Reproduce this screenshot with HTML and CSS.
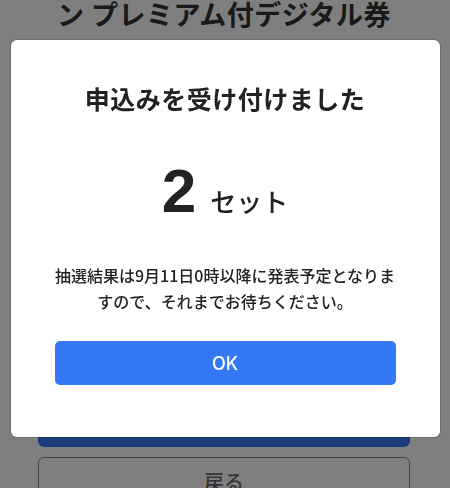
FILE: index.html
```html
<!DOCTYPE html>
<html lang="ja">
<head>
<meta charset="utf-8">
<title>申込み完了</title>
<link rel="stylesheet" href="styles.css">
</head>
<body>
<main class="page">
  <h1 class="page-title">ン プレミアム付デジタル券</h1>
  <div class="actions">
    <button class="btn btn-primary" type="button">申し込む</button>
    <button class="btn btn-back" type="button">戻る</button>
  </div>
</main>
<div class="overlay">
  <div class="modal" role="dialog">
    <h2 class="modal-title">申込みを受け付けました</h2>
    <div class="count">
      <span class="count-num">2</span>
      <span class="count-unit">セット</span>
    </div>
    <p class="modal-text">抽選結果は9月11日0時以降に発表予定となりますので、それまでお待ちください。</p>
    <button class="btn btn-ok" type="button">OK</button>
  </div>
</div>
</body>
</html>
```

FILE: styles.css
```css
* {
  box-sizing: border-box;
}

html, body {
  margin: 0;
  height: 100%;
}

body {
  font-family: "Noto Sans CJK JP", "Noto Sans", sans-serif;
  background: #ffffff;
  color: #333333;
  overflow: hidden;
}

.page {
  padding: 0 40px 0 38px;
}

.page-title {
  margin: 0;
  font-size: 27px;
  line-height: 28px;
  font-weight: 700;
  letter-spacing: 0.5px;
  color: #333333;
  text-align: center;
  white-space: nowrap;
}

.actions {
  margin-top: 371px;
  display: flex;
  flex-direction: column;
  gap: 10px;
}

.btn {
  display: block;
  width: 100%;
  border: 0;
  font-family: inherit;
  padding: 0;
  cursor: pointer;
}

.btn-primary {
  height: 48px;
  border-radius: 6px;
  background: #3478f6;
  color: #ffffff;
  font-size: 20px;
  font-weight: 700;
}

.btn-back {
  height: 48px;
  border-radius: 6px;
  border: 1px solid #888888;
  background: #ffffff;
  color: #666666;
  font-size: 20px;
  font-weight: 500;
}

.overlay {
  position: fixed;
  inset: 0;
  background: rgba(0, 0, 0, 0.5);
  display: flex;
  justify-content: center;
  align-items: flex-start;
  padding-top: 40px;
}

.modal {
  width: 429px;
  background: #ffffff;
  border-radius: 6px;
  padding: 40px 44px 52px;
  text-align: center;
  color: #222222;
  box-shadow: 0 0 0 1px rgba(0, 0, 0, 0.15);
}

.modal-title {
  margin: 0;
  font-size: 25px;
  line-height: 36px;
  font-weight: 700;
  letter-spacing: 0.5px;
}

.count {
  margin-top: 44px;
  display: flex;
  justify-content: center;
  align-items: baseline;
  height: 62px;
}

.count-num {
  font-family: "Liberation Sans", Arial, sans-serif;
  font-size: 62px;
  line-height: 62px;
  font-weight: 700;
}

.count-unit {
  margin-left: 14px;
  font-size: 26px;
  line-height: 30px;
  font-weight: 500;
}

.modal-text {
  margin: 40px 0 0;
  font-size: 16px;
  line-height: 26px;
  font-weight: 500;
}

.btn-ok {
  margin-top: 27px;
  height: 44px;
  border-radius: 5px;
  background: #3478f6;
  color: #ffffff;
  font-family: "Inter", "Liberation Sans", sans-serif;
  font-size: 18px;
  font-weight: 500;
}
```
